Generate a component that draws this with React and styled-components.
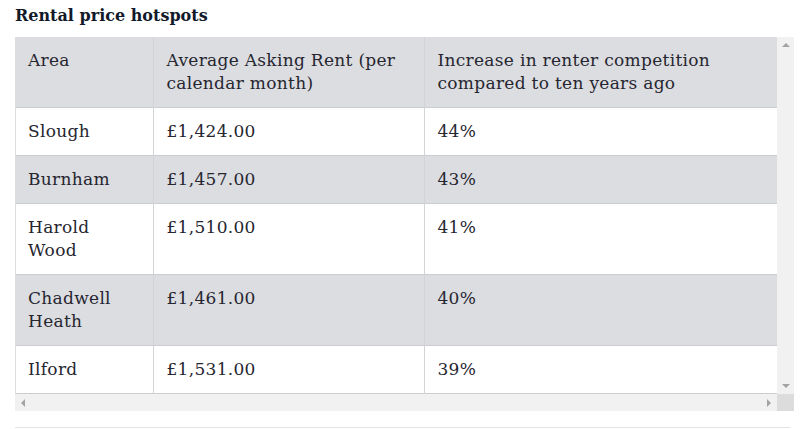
import React from "react";
import styled, { createGlobalStyle } from "styled-components";

const Global = createGlobalStyle`
  html, body { margin: 0; padding: 0; background: #fff; }
  body { font-family: "DejaVu Serif", "Liberation Serif", serif; color: #1e1e28; }
`;

const Page = styled.div`
  padding: 6px 11px 0 15px;
  width: 779px;
`;

const Title = styled.h3`
  margin: 0 0 11px;
  font-size: 16px;
  line-height: 20px;
  font-weight: 700;
  color: #121a2a;
`;

const Scroller = styled.div`
  display: grid;
  grid-template-columns: 762px 17px;
  grid-template-rows: 357px 17px;
  width: 779px;
`;

const Viewport = styled.div`
  overflow: hidden;
  border-left: 1px solid #dcdde1;
`;

const Table = styled.table`
  border-collapse: collapse;
  width: 761px;
  table-layout: fixed;
  font-size: 17px;
  letter-spacing: 0.3px;
  line-height: 23px;
  color: #262630;
`;

const Row = styled.tr`
  background: ${(p) => (p.$shaded ? "#dcdde1" : "#ffffff")};
  border-bottom: 1px solid #cbccd0;
`;

const Cell = styled.td`
  padding: 12px 14px 12px 12px;
  vertical-align: top;
  text-align: left;
  font-weight: 400;
  & + & {
    border-left: 1px solid #d2d3d7;
    padding-left: 13px;
  }
`;

const VBar = styled.div`
  background: #f1f1f1;
  display: flex;
  flex-direction: column;
  justify-content: space-between;
  align-items: center;
  padding: 6px 0;
`;

const HBar = styled.div`
  background: #f1f1f1;
  display: flex;
  justify-content: space-between;
  align-items: center;
  padding: 0 6px;
`;

const Corner = styled.div`
  background: #dcdcdc;
`;

const Arrow = styled.span`
  width: 0;
  height: 0;
  border: 4px solid transparent;
  ${(p) =>
    p.$dir === "up"
      ? "border-bottom-color:#a3a3a3;border-top-width:0;"
      : p.$dir === "down"
      ? "border-top-color:#a3a3a3;border-bottom-width:0;"
      : p.$dir === "left"
      ? "border-right-color:#a3a3a3;border-left-width:0;"
      : "border-left-color:#a3a3a3;border-right-width:0;"}
`;

const Rule = styled.hr`
  margin: 16px 0 0;
  border: 0;
  border-top: 1px solid #e2e2e2;
  width: 775px;
`;

const rows = [
  ["Slough", "£1,424.00", "44%"],
  ["Burnham", "£1,457.00", "43%"],
  ["Harold Wood", "£1,510.00", "41%"],
  ["Chadwell Heath", "£1,461.00", "40%"],
  ["Ilford", "£1,531.00", "39%"],
];

export default function App() {
  return (
    <>
      <Global />
      <Page>
        <Title>Rental price hotspots</Title>
        <Scroller>
          <Viewport>
            <Table>
              <colgroup>
                <col style={{ width: 137 }} />
                <col style={{ width: 271 }} />
                <col />
              </colgroup>
              <tbody>
                <Row $shaded>
                  <Cell>Area</Cell>
                  <Cell>Average Asking Rent (per calendar month)</Cell>
                  <Cell>Increase in renter competition compared to ten years ago</Cell>
                </Row>
                {rows.map((r, i) => (
                  <Row key={r[0]} $shaded={i % 2 === 1}>
                    <Cell>{r[0]}</Cell>
                    <Cell>{r[1]}</Cell>
                    <Cell>{r[2]}</Cell>
                  </Row>
                ))}
              </tbody>
            </Table>
          </Viewport>
          <VBar>
            <Arrow $dir="up" />
            <Arrow $dir="down" />
          </VBar>
          <HBar>
            <Arrow $dir="left" />
            <Arrow $dir="right" />
          </HBar>
          <Corner />
        </Scroller>
        <Rule />
      </Page>
    </>
  );
}
